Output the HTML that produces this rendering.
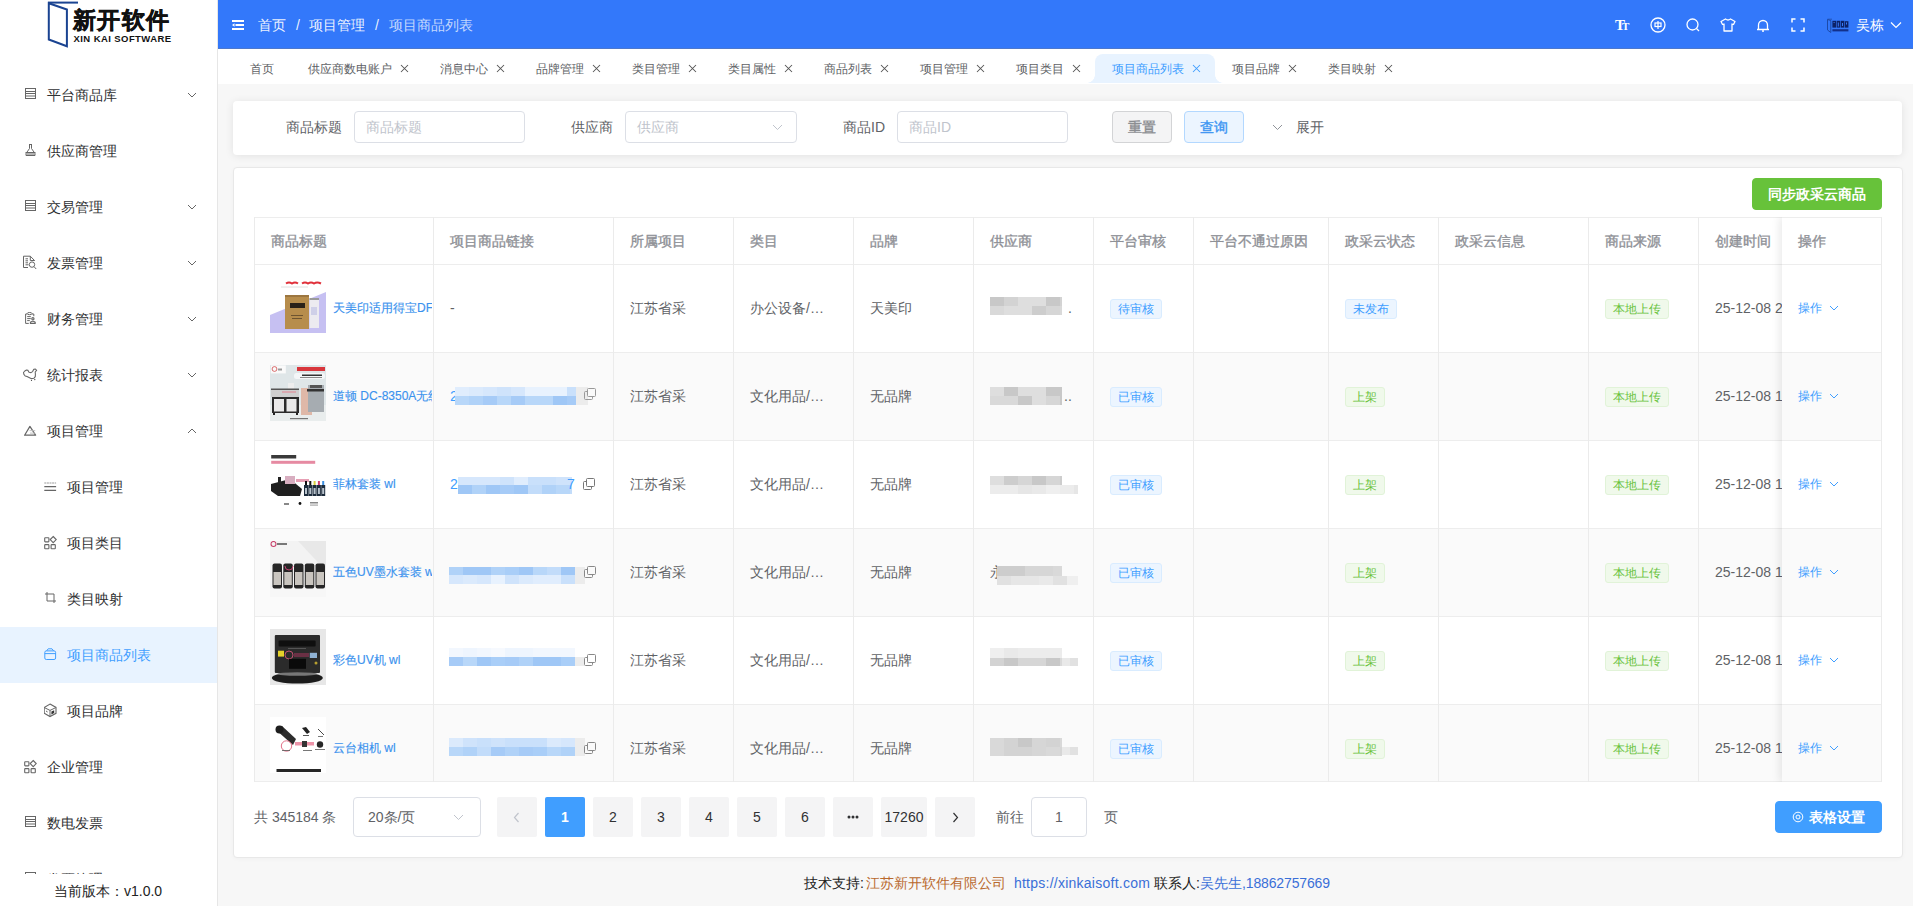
<!DOCTYPE html>
<html><head><meta charset="utf-8"><style>
*{box-sizing:border-box;margin:0;padding:0}
html,body{width:1913px;height:906px;overflow:hidden;background:#f7f7f7;font-family:"Liberation Sans",sans-serif;font-size:14px;color:#303133}
.a{position:absolute;white-space:nowrap}
#side{position:absolute;left:0;top:0;width:218px;height:906px;background:#fff;border-right:1px solid #e6e6e6;overflow:hidden}
.mt{position:absolute;font-size:14px;color:#303133;line-height:20px}
#hdr{position:absolute;left:218px;top:0;width:1695px;height:48px;background:#3378fa}
#tabs{position:absolute;left:218px;top:48px;width:1695px;height:36px;background:#fff}
.tab{position:absolute;font-size:12px;color:#606266;line-height:16px}
.card{position:absolute;background:#fff;border-radius:4px}
.lbl{position:absolute;font-size:14px;color:#606266;line-height:20px}
.inp{position:absolute;height:32px;border:1px solid #dcdfe6;border-radius:4px;background:#fff;font-size:14px;color:#c0c4cc;line-height:30px;padding-left:11px}
.btn{position:absolute;height:32px;border-radius:4px;text-align:center;line-height:30px;font-size:14px}
.vl{position:absolute;width:1px;background:#ebebeb}
.hl{position:absolute;height:1px;background:#ededed}
.th{position:absolute;font-size:14px;color:#8e9096;font-weight:normal;-webkit-text-stroke:0.35px #8e9096;line-height:20px}
.td{position:absolute;font-size:14px;color:#606266;line-height:20px}
.tag{position:absolute;height:20px;border-radius:3px;font-size:12px;line-height:18px;text-align:center;border:1px solid}
.tb{background:#ecf5ff;border-color:#d9ecff;color:#409eff}
.tg{background:#f0f9eb;border-color:#e1f3d8;color:#67c23a}
.pg{position:absolute;top:797px;height:40px;width:40px;background:#f4f4f5;border-radius:2px;text-align:center;line-height:40px;font-size:14px;color:#303133}
</style></head><body>
<div id="side">
<svg class="a" style="left:40px;top:0px" width="40" height="50" viewBox="0 0 40 50">
<path d="M8.8 3.2 V39.5 L26.9 46.3 V9.5 Z" fill="none" stroke="#1a4391" stroke-width="2" stroke-linejoin="miter"/>
<path d="M8 2.6 H38" fill="none" stroke="#1a4391" stroke-width="2"/>
</svg>
<div class="a" style="left:73px;top:7px;font-size:23px;font-weight:bold;color:#111;line-height:27px;letter-spacing:1.4px;-webkit-text-stroke:0.5px #111">新开软件</div>
<div class="a" style="left:73.5px;top:33.5px;font-size:9.5px;font-weight:bold;color:#111;line-height:10px;letter-spacing:0.42px">XIN KAI SOFTWARE</div>
<svg class="a" style="left:24px;top:87px" width="15" height="15" viewBox="0 0 15 15" fill="none" stroke="#666" stroke-width="1"><rect x="1.5" y="1.5" width="10" height="10"/><path d="M1.5 4.5h10M1.5 6.5h10M1.5 9h10"/></svg>
<div class="mt" style="left:47px;top:84.5px;color:#303133">平台商品库</div>
<svg class="a" style="left:187px;top:91.5px;stroke-width:1" width="10" height="6" viewBox="0 0 10 6" fill="none" stroke="#666" stroke-width="1"><path d="M1 1l4 4 4-4"/></svg>
<svg class="a" style="left:24px;top:143px" width="15" height="15" viewBox="0 0 15 15" fill="none" stroke="#666" stroke-width="1"><path d="M5 1.5h3M5.5 1.5v4L2 10.5v2h9v-2L7.5 5.5v-4M1.5 9.5h10M2.5 11h8"/></svg>
<div class="mt" style="left:47px;top:140.5px;color:#303133">供应商管理</div>
<svg class="a" style="left:24px;top:199px" width="15" height="15" viewBox="0 0 15 15" fill="none" stroke="#666" stroke-width="1"><rect x="1.5" y="1.5" width="10" height="10"/><path d="M1.5 4.5h10M1.5 6.5h10M1.5 9h10"/></svg>
<div class="mt" style="left:47px;top:196.5px;color:#303133">交易管理</div>
<svg class="a" style="left:187px;top:203.5px;stroke-width:1" width="10" height="6" viewBox="0 0 10 6" fill="none" stroke="#666" stroke-width="1"><path d="M1 1l4 4 4-4"/></svg>
<svg class="a" style="left:23px;top:255px" width="15" height="15" viewBox="0 0 15 15" fill="none" stroke="#666" stroke-width="1"><path d="M0.5 1.2 H7.3 L11.5 5.5 V6 M0.5 1.2 V12.5 H5 M7.3 1.2 V5.5 H11.5 M2.5 3.8 h2.5 M2.5 5.8 h2.5 M2.5 7.8 h2.5 M2.5 9.8 h3"/><circle cx="9" cy="9.6" r="2.7"/><path d="M11 11.6 L13.2 14"/></svg>
<div class="mt" style="left:47px;top:252.5px;color:#303133">发票管理</div>
<svg class="a" style="left:187px;top:259.5px;stroke-width:1" width="10" height="6" viewBox="0 0 10 6" fill="none" stroke="#666" stroke-width="1"><path d="M1 1l4 4 4-4"/></svg>
<svg class="a" style="left:24px;top:311px" width="15" height="15" viewBox="0 0 15 15" fill="none" stroke="#666" stroke-width="1"><path d="M1.6 3 V12.4 H4.8 M1.6 3 H3.2 M8 3 H9.8 V5.2 M3.2 5.6 h3.6 M3.2 7.6 h3.6 M3.2 9.6 h2.6"/><ellipse cx="5.6" cy="2.6" rx="2.4" ry="1.1"/><circle cx="8.9" cy="7.8" r="1.1" stroke-width="1.2"/><path d="M6.4 12.4 V11.2 Q8.9 9.4 11.2 11.2 V12.4 Z" stroke-width="1.1"/></svg>
<div class="mt" style="left:47px;top:308.5px;color:#303133">财务管理</div>
<svg class="a" style="left:187px;top:315.5px;stroke-width:1" width="10" height="6" viewBox="0 0 10 6" fill="none" stroke="#666" stroke-width="1"><path d="M1 1l4 4 4-4"/></svg>
<svg class="a" style="left:23px;top:367px" width="15" height="15" viewBox="0 0 15 15" fill="none" stroke="#666" stroke-width="1"><path d="M0.5 5.5 L1.8 4 L3.5 3 L5 3.4 L6 5.3 L8 5.6 L9.6 4.6 L10.8 2.2 L12.4 2 L13.6 3.4 L12.2 5 L12.4 7.2 L12.3 9.6 L11 11.2 L8 11.6 L6 10.6 L4 9.6 L2.2 9 L0.9 7.4 Z" stroke-linejoin="round" stroke-width="1.1"/><circle cx="8.5" cy="13.4" r=".6" fill="#555" stroke="none"/><circle cx="11.8" cy="12.6" r=".7" fill="#444" stroke="none"/></svg>
<div class="mt" style="left:47px;top:364.5px;color:#303133">统计报表</div>
<svg class="a" style="left:187px;top:371.5px;stroke-width:1" width="10" height="6" viewBox="0 0 10 6" fill="none" stroke="#666" stroke-width="1"><path d="M1 1l4 4 4-4"/></svg>
<svg class="a" style="left:24px;top:423px" width="15" height="15" viewBox="0 0 15 15" fill="none" stroke="#666" stroke-width="1"><path d="M5.9 3.4 L0.6 12.2 H11.6 Z" stroke-width="1.2" stroke-linejoin="round"/><path d="M5.6 7.6 H11.2 M6 10.1 H11" stroke="#bbb" stroke-width=".9"/></svg>
<div class="mt" style="left:47px;top:420.5px;color:#303133">项目管理</div>
<svg class="a" style="left:187px;top:427.5px;stroke-width:1" width="10" height="6" viewBox="0 0 10 6" fill="none" stroke="#666" stroke-width="1"><path d="M1 5l4-4 4 4"/></svg>
<svg class="a" style="left:44px;top:479px" width="15" height="15" viewBox="0 0 15 15" fill="none" stroke="#666" stroke-width="1"><path d="M0.3 4h11.8" stroke="#999" stroke-dasharray="2 .6"/><path d="M0.3 7.6h11.8M0.3 11.4h11.8" stroke-width="1.1"/></svg>
<div class="mt" style="left:67px;top:476.5px;color:#303133">项目管理</div>
<svg class="a" style="left:44px;top:535px" width="15" height="15" viewBox="0 0 15 15" fill="none" stroke="#666" stroke-width="1"><rect x="0.7" y="2.7" width="4.2" height="4.2" rx=".6" stroke-width="1.1"/><rect x="0.7" y="9.6" width="4.2" height="4.2" rx=".6" stroke-width="1.1"/><rect x="7.1" y="9.6" width="4.2" height="4.2" rx=".6" stroke-width="1.1"/><path d="M9.2 1.5 L12.2 4.6 L9.2 7.6 L6.2 4.6 Z" stroke-width="1.1"/></svg>
<div class="mt" style="left:67px;top:532.5px;color:#303133">项目类目</div>
<svg class="a" style="left:44px;top:591px" width="15" height="15" viewBox="0 0 15 15" fill="none" stroke="#666" stroke-width="1"><path d="M3 1v9h9M1 3h9v9"/></svg>
<div class="mt" style="left:67px;top:588.5px;color:#303133">类目映射</div>
<div class="a" style="left:0;top:627px;width:217px;height:56px;background:#e8f3ff"></div>
<svg class="a" style="left:44px;top:647px" width="15" height="15" viewBox="0 0 15 15" fill="none" stroke="#409eff" stroke-width="1"><rect x="0.8" y="3.9" width="10.8" height="8.6" rx="1.5"/><path d="M2.6 3.9 L4.2 1.8 H8 L9.6 3.9 M0.8 6.6h10.8"/></svg>
<div class="mt" style="left:67px;top:644.5px;color:#409eff">项目商品列表</div>
<svg class="a" style="left:44px;top:703px" width="15" height="15" viewBox="0 0 15 15" fill="none" stroke="#666" stroke-width="1"><path d="M6 1.1 L12 4.4 V10.3 L6 13.5 L0.2 10.3 V4.4 Z" stroke-width="1.1"/><path d="M0.4 4.6 L6 7.4 L11.8 4.6 M6 7.4 V13.4 M2 8 L3.6 9"/><path d="M7.4 8.6 L10.2 7.3 V10 L7.4 11.4 Z" fill="#333" stroke="none"/></svg>
<div class="mt" style="left:67px;top:700.5px;color:#303133">项目品牌</div>
<svg class="a" style="left:24px;top:759px" width="15" height="15" viewBox="0 0 15 15" fill="none" stroke="#666" stroke-width="1"><rect x="0.7" y="2.7" width="4.2" height="4.2" rx=".6" stroke-width="1.1"/><rect x="0.7" y="9.6" width="4.2" height="4.2" rx=".6" stroke-width="1.1"/><rect x="7.1" y="9.6" width="4.2" height="4.2" rx=".6" stroke-width="1.1"/><path d="M9.2 1.5 L12.2 4.6 L9.2 7.6 L6.2 4.6 Z" stroke-width="1.1"/></svg>
<div class="mt" style="left:47px;top:756.5px;color:#303133">企业管理</div>
<svg class="a" style="left:24px;top:815px" width="15" height="15" viewBox="0 0 15 15" fill="none" stroke="#666" stroke-width="1"><rect x="1.5" y="1.5" width="10" height="10"/><path d="M1.5 4.5h10M1.5 6.5h10M1.5 9h10"/></svg>
<div class="mt" style="left:47px;top:812.5px;color:#303133">数电发票</div>
<svg class="a" style="left:24px;top:871px" width="15" height="15" viewBox="0 0 15 15" fill="none" stroke="#666" stroke-width="1"><rect x="1.5" y="1.5" width="10" height="10"/><path d="M1.5 4.5h10M1.5 6.5h10M1.5 9h10"/></svg>
<div class="mt" style="left:47px;top:868.5px;color:#303133">发票管理</div>
<div class="a" style="left:0;top:874px;width:217px;height:32px;background:#fff"></div>
<div class="a" style="left:54px;top:881px;line-height:20px;font-size:14px;color:#222">当前版本：v1.0.0</div>
</div>
<div id="hdr"></div>
<svg class="a" style="left:231px;top:19px" width="14" height="12" viewBox="0 0 14 12">
<rect x="1" y="1" width="12" height="2" fill="#ffffff"/><rect x="4.5" y="5" width="8.5" height="2" fill="#ffffff"/>
<path d="M1 6 L3.5 4.2 L3.5 7.8 Z" fill="#ffffff"/><rect x="1" y="9" width="12" height="2" fill="#ffffff"/></svg>
<div class="a" style="left:258px;top:15px;line-height:20px;font-size:14px;color:rgba(255,255,255,0.92)">首页</div>
<div class="a" style="left:296px;top:15px;line-height:20px;font-size:14px;color:rgba(255,255,255,0.92)">/</div>
<div class="a" style="left:309px;top:15px;line-height:20px;font-size:14px;color:rgba(255,255,255,0.92)">项目管理</div>
<div class="a" style="left:375px;top:15px;line-height:20px;font-size:14px;color:rgba(255,255,255,0.92)">/</div>
<div class="a" style="left:389px;top:15px;line-height:20px;font-size:14px;color:rgba(255,255,255,0.72)">项目商品列表</div>
<div class="a" style="left:1615px;top:15px;font-family:'Liberation Serif',serif;font-weight:bold;color:#fff;line-height:20px"><span style="font-size:15px">T</span><span style="font-size:11px;margin-left:-3px">T</span></div>
<svg class="a" style="left:1650px;top:17px" width="16" height="16" viewBox="0 0 16 16" fill="none" stroke="#fff" stroke-width="1.3">
<circle cx="8" cy="8" r="7"/><rect x="5" y="6" width="6" height="3.5" stroke-width="1.2"/><path d="M8 4v8" stroke-width="1.2"/></svg>
<svg class="a" style="left:1686px;top:18px" width="14" height="14" viewBox="0 0 14 14" fill="none" stroke="#fff" stroke-width="1.3">
<circle cx="6.5" cy="6.5" r="5.5"/><path d="M10.5 10.5l2.5 2.5"/></svg>
<svg class="a" style="left:1720px;top:18px" width="16" height="14" viewBox="0 0 16 14" fill="none" stroke="#fff" stroke-width="1.3" stroke-linejoin="round">
<path d="M5.5 1 L1 3.5 L2.5 6.5 L4 6 V13 H12 V6 L13.5 6.5 L15 3.5 L10.5 1 Q8 3 5.5 1 Z"/></svg>
<svg class="a" style="left:1756px;top:18px" width="14" height="14" viewBox="0 0 14 14" fill="none" stroke="#fff" stroke-width="1.3">
<path d="M2.5 11 V7 A4.5 4.5 0 0 1 11.5 7 V11 M1 11.5h12"/><path d="M6 13h2"/></svg>
<svg class="a" style="left:1791px;top:18px" width="14" height="14" viewBox="0 0 14 14" fill="none" stroke="#fff" stroke-width="1.5">
<path d="M1 4.5V1h3.5M9.5 1H13v3.5M13 9.5V13H9.5M4.5 13H1V9.5"/></svg>
<svg class="a" style="left:1826px;top:18px" width="24" height="16" viewBox="0 0 24 16">
<path d="M1.5 1.5 V12 L4.8 14.5 V2.5 Z" fill="none" stroke="#1d4aa8" stroke-width="1"/><path d="M1.5 1.2 H6" stroke="#1d4aa8" stroke-width="0.8"/>
<g fill="#0d2266"><rect x="6.4" y="2.8" width="3.6" height="6.8"/><rect x="10.6" y="2.8" width="3.6" height="6.8"/><rect x="14.8" y="2.8" width="3.6" height="6.8"/><rect x="19" y="3.2" width="3.4" height="6.4"/></g>
<g fill="#12308a"><rect x="6.4" y="11.2" width="16" height="2.2"/></g>
<g fill="#3a7bf7"><rect x="7.6" y="4" width="1" height="1"/><rect x="11.8" y="4.5" width="1" height="4"/><rect x="16" y="5" width="1" height="3"/><rect x="20" y="4.5" width="1" height="2"/></g></svg>
<div class="a" style="left:1856px;top:15px;line-height:20px;font-size:14px;color:#fff">吴栋</div>
<svg class="a" style="left:1890px;top:21px" width="12" height="8" viewBox="0 0 12 8" fill="none" stroke="#fff" stroke-width="1.2"><path d="M1 1.5l5 5 5-5"/></svg>
<div id="tabs"></div>
<div class="a" style="left:218px;top:48px;width:1695px;height:1px;background:#4d78cc"></div>
<div class="a" style="left:1095px;top:54px;width:120px;height:29px;background:#e8f3ff;border-radius:8px 8px 0 0"></div>
<div class="a" style="left:1087px;top:75px;width:8px;height:8px;background:radial-gradient(circle at 0 0, #fff 7.5px, #e8f3ff 8px)"></div>
<div class="a" style="left:1215px;top:75px;width:8px;height:8px;background:radial-gradient(circle at 100% 0, #fff 7.5px, #e8f3ff 8px)"></div>
<div class="tab" style="left:250.3px;top:60.5px;color:#606266">首页</div>
<div class="tab" style="left:308.3px;top:60.5px;color:#606266">供应商数电账户</div>
<svg class="a" style="left:400px;top:64px" width="9" height="9" viewBox="0 0 9 9" fill="none" stroke="#555" stroke-width="1.05"><path d="M1 1l7 7M8 1l-7 7"/></svg>
<div class="tab" style="left:440.3px;top:60.5px;color:#606266">消息中心</div>
<svg class="a" style="left:496px;top:64px" width="9" height="9" viewBox="0 0 9 9" fill="none" stroke="#555" stroke-width="1.05"><path d="M1 1l7 7M8 1l-7 7"/></svg>
<div class="tab" style="left:536.3px;top:60.5px;color:#606266">品牌管理</div>
<svg class="a" style="left:592px;top:64px" width="9" height="9" viewBox="0 0 9 9" fill="none" stroke="#555" stroke-width="1.05"><path d="M1 1l7 7M8 1l-7 7"/></svg>
<div class="tab" style="left:632.3px;top:60.5px;color:#606266">类目管理</div>
<svg class="a" style="left:688px;top:64px" width="9" height="9" viewBox="0 0 9 9" fill="none" stroke="#555" stroke-width="1.05"><path d="M1 1l7 7M8 1l-7 7"/></svg>
<div class="tab" style="left:728.3px;top:60.5px;color:#606266">类目属性</div>
<svg class="a" style="left:784px;top:64px" width="9" height="9" viewBox="0 0 9 9" fill="none" stroke="#555" stroke-width="1.05"><path d="M1 1l7 7M8 1l-7 7"/></svg>
<div class="tab" style="left:824.3px;top:60.5px;color:#606266">商品列表</div>
<svg class="a" style="left:880px;top:64px" width="9" height="9" viewBox="0 0 9 9" fill="none" stroke="#555" stroke-width="1.05"><path d="M1 1l7 7M8 1l-7 7"/></svg>
<div class="tab" style="left:920.3px;top:60.5px;color:#606266">项目管理</div>
<svg class="a" style="left:976px;top:64px" width="9" height="9" viewBox="0 0 9 9" fill="none" stroke="#555" stroke-width="1.05"><path d="M1 1l7 7M8 1l-7 7"/></svg>
<div class="tab" style="left:1016.3px;top:60.5px;color:#606266">项目类目</div>
<svg class="a" style="left:1072px;top:64px" width="9" height="9" viewBox="0 0 9 9" fill="none" stroke="#555" stroke-width="1.05"><path d="M1 1l7 7M8 1l-7 7"/></svg>
<div class="tab" style="left:1112.3px;top:60.5px;color:#409eff">项目商品列表</div>
<svg class="a" style="left:1192px;top:64px" width="9" height="9" viewBox="0 0 9 9" fill="none" stroke="#409eff" stroke-width="1.05"><path d="M1 1l7 7M8 1l-7 7"/></svg>
<div class="tab" style="left:1232.3px;top:60.5px;color:#606266">项目品牌</div>
<svg class="a" style="left:1288px;top:64px" width="9" height="9" viewBox="0 0 9 9" fill="none" stroke="#555" stroke-width="1.05"><path d="M1 1l7 7M8 1l-7 7"/></svg>
<div class="tab" style="left:1328.3px;top:60.5px;color:#606266">类目映射</div>
<svg class="a" style="left:1384px;top:64px" width="9" height="9" viewBox="0 0 9 9" fill="none" stroke="#555" stroke-width="1.05"><path d="M1 1l7 7M8 1l-7 7"/></svg>
<div class="card" style="left:233px;top:101px;width:1669px;height:54px;box-shadow:0 1px 8px rgba(0,0,0,.09)"></div>
<div class="lbl" style="left:286px;top:117px">商品标题</div>
<div class="inp" style="left:354px;top:111px;width:171px">商品标题</div>
<div class="lbl" style="left:571px;top:117px">供应商</div>
<div class="inp" style="left:625px;top:111px;width:172px">供应商</div>
<svg class="a" style="left:772px;top:124px" width="11" height="7" viewBox="0 0 11 7" fill="none" stroke="#c0c4cc" stroke-width="1"><path d="M1 1l4.5 4.5L10 1"/></svg>
<div class="lbl" style="left:843px;top:117px">商品ID</div>
<div class="inp" style="left:897px;top:111px;width:171px">商品ID</div>
<div class="btn" style="left:1112px;top:111px;width:60px;background:#f4f4f5;border:1px solid #d3d4d6;color:#8a8c90;-webkit-text-stroke:0.4px #8a8c90">重置</div>
<div class="btn" style="left:1184px;top:111px;width:60px;background:#ecf5ff;border:1px solid #b3d8ff;color:#3d95f2;-webkit-text-stroke:0.4px #3d95f2">查询</div>
<svg class="a" style="left:1272px;top:124px" width="11" height="7" viewBox="0 0 11 7" fill="none" stroke="#909399" stroke-width="1"><path d="M1 1l4.5 4.5L10 1"/></svg>
<div class="lbl" style="left:1296px;top:117px">展开</div>
<div class="card" style="left:233px;top:167px;width:1670px;height:691px;border:1px solid #e8e8e8;box-shadow:0 1px 4px rgba(0,0,0,.03)"></div>
<div class="btn" style="left:1752px;top:178px;width:130px;background:#67c23a;border:1px solid #67c23a;color:#fff;font-weight:bold">同步政采云商品</div>
<div class="a" style="left:254px;top:217px;width:1628px;height:565px;overflow:hidden;background:#fff">
<div class="a" style="left:0;top:136px;width:1628px;height:87px;background:#fafafa"></div>
<div class="a" style="left:0;top:312px;width:1628px;height:87px;background:#fafafa"></div>
<div class="a" style="left:0;top:488px;width:1628px;height:87px;background:#fafafa"></div>
<div class="hl" style="left:0;top:0;width:1628px"></div>
<div class="hl" style="left:0;top:47px;width:1628px"></div>
<div class="hl" style="left:0;top:135px;width:1628px"></div>
<div class="hl" style="left:0;top:223px;width:1628px"></div>
<div class="hl" style="left:0;top:311px;width:1628px"></div>
<div class="hl" style="left:0;top:399px;width:1628px"></div>
<div class="hl" style="left:0;top:487px;width:1628px"></div>
<div class="hl" style="left:0;top:575px;width:1628px"></div>
<div class="hl" style="left:0;top:564px;width:1628px"></div>
<div class="vl" style="left:0px;top:0;height:565px"></div>
<div class="vl" style="left:179px;top:0;height:565px"></div>
<div class="vl" style="left:359px;top:0;height:565px"></div>
<div class="vl" style="left:479px;top:0;height:565px"></div>
<div class="vl" style="left:599px;top:0;height:565px"></div>
<div class="vl" style="left:719px;top:0;height:565px"></div>
<div class="vl" style="left:839px;top:0;height:565px"></div>
<div class="vl" style="left:939px;top:0;height:565px"></div>
<div class="vl" style="left:1074px;top:0;height:565px"></div>
<div class="vl" style="left:1184px;top:0;height:565px"></div>
<div class="vl" style="left:1334px;top:0;height:565px"></div>
<div class="vl" style="left:1444px;top:0;height:565px"></div>
<div class="th" style="left:17px;top:14px">商品标题</div>
<div class="th" style="left:196px;top:14px">项目商品链接</div>
<div class="th" style="left:376px;top:14px">所属项目</div>
<div class="th" style="left:496px;top:14px">类目</div>
<div class="th" style="left:616px;top:14px">品牌</div>
<div class="th" style="left:736px;top:14px">供应商</div>
<div class="th" style="left:856px;top:14px">平台审核</div>
<div class="th" style="left:956px;top:14px">平台不通过原因</div>
<div class="th" style="left:1091px;top:14px">政采云状态</div>
<div class="th" style="left:1201px;top:14px">政采云信息</div>
<div class="th" style="left:1351px;top:14px">商品来源</div>
<div class="th" style="left:1461px;top:14px">创建时间</div>
<svg class="a" style="left:16px;top:60px" width="56" height="56" viewBox="0 0 56 56"><rect width="56" height="56" fill="#fff"/>
<path d="M0 38 L56 15 V56 H0 Z" fill="#c6c0f2"/>
<path d="M16 6.5 q3 -2 6 0 q3 -2 6 0 M32 6.5 q3 -2 6 0 q3 -2 6 0 q3 -2 7 0" stroke="#e0303a" stroke-width="2" fill="none"/>
<path d="M11 10h27" stroke="#d8d8d8" stroke-width="0.8"/>
<rect x="15" y="18" width="24" height="34" fill="#b78d4c"/>
<rect x="15" y="18" width="24" height="2" fill="#9c7640"/>
<rect x="20" y="26" width="15" height="5" fill="#2a2118"/>
<rect x="21" y="38" width="12" height="1" fill="#6e5430"/><rect x="22" y="41" width="10" height="1" fill="#6e5430"/>
<rect x="39.5" y="21" width="9.5" height="30" fill="#ecebf0"/>
<rect x="39.5" y="21" width="9.5" height="2" fill="#9a9a9a"/><rect x="41" y="30" width="6" height="8" fill="#cfd0e8"/></svg>
<div class="a" style="left:79px;top:82px;width:99px;overflow:hidden;font-size:12px;line-height:18px;color:#3a92ee;-webkit-text-stroke:0.15px #3a92ee">天美印适用得宝DF</div>
<div class="td" style="left:196px;top:81px">-</div>
<div class="td" style="left:376px;top:81px">江苏省采</div>
<div class="td" style="left:496px;top:81px">办公设备/…</div>
<div class="td" style="left:616px;top:81px">天美印</div>
<div class="a" style="left:736px;top:80px;width:72px;height:18px;filter:blur(0.7px)"><div class="a" style="left:0px;top:0px;width:14px;height:9px;background:#c8c8c8"></div><div class="a" style="left:14px;top:0px;width:14px;height:9px;background:#d3d3d3"></div><div class="a" style="left:28px;top:0px;width:14px;height:9px;background:#dedede"></div><div class="a" style="left:42px;top:0px;width:14px;height:9px;background:#dedede"></div><div class="a" style="left:56px;top:0px;width:14px;height:9px;background:#c8c8c8"></div><div class="a" style="left:70px;top:0px;width:2px;height:9px;background:#d3d3d3"></div><div class="a" style="left:0px;top:9px;width:14px;height:9px;background:#d9d9d9"></div><div class="a" style="left:14px;top:9px;width:14px;height:9px;background:#dedede"></div><div class="a" style="left:28px;top:9px;width:14px;height:9px;background:#dedede"></div><div class="a" style="left:42px;top:9px;width:14px;height:9px;background:#cdcdcd"></div><div class="a" style="left:56px;top:9px;width:14px;height:9px;background:#d6d6d6"></div><div class="a" style="left:70px;top:9px;width:2px;height:9px;background:#d9d9d9"></div></div><div class="td" style="left:814px;top:81px">.</div>
<div class="tag tb" style="left:856px;top:82px;width:52px">待审核</div>
<div class="tag tb" style="left:1091px;top:82px;width:52px">未发布</div>
<div class="tag tg" style="left:1351px;top:82px;width:64px">本地上传</div>
<div class="td" style="left:1461px;top:81px">25-12-08 23:11:20</div>
<svg class="a" style="left:16px;top:148px" width="56" height="56" viewBox="0 0 56 56"><rect width="56" height="56" fill="#dfe6e8"/>
<rect x="0" y="40" width="56" height="16" fill="#e9eded"/>
<rect x="0.8" y="0.4" width="15" height="8" fill="#fafafa"/><circle cx="4.5" cy="4" r="2.4" fill="none" stroke="#c33" stroke-width=".7"/><rect x="8" y="3.5" width="4" height="2" fill="#999"/>
<rect x="27" y="2" width="28" height="4" fill="#d8363c"/>
<rect x="24" y="8" width="31" height="6" rx="2.5" fill="#f4f6f8"/><rect x="32" y="9.5" width="20" height="1.5" fill="#333"/><rect x="30" y="12" width="22" height="1" fill="#888"/>
<rect x="18" y="18" width="6" height="6" fill="#eee"/>
<rect x="1" y="24" width="28" height="8" fill="#cfcfcf"/><rect x="1" y="23.5" width="28" height="1.5" fill="#555"/><rect x="12" y="26" width="14" height="2" fill="#d9a9b0"/>
<rect x="2" y="32" width="27" height="16" fill="#2b2b2b"/><rect x="4" y="34" width="10" height="12.5" fill="#e9e9e9"/><rect x="16.5" y="34" width="10" height="12.5" fill="#e9e9e9"/>
<rect x="3" y="48" width="2" height="2" fill="#222"/><rect x="26" y="48" width="2" height="2" fill="#222"/>
<rect x="31" y="23" width="11" height="27" fill="#dfb8a8"/>
<rect x="38" y="20" width="16" height="27" fill="#a6acb1"/><rect x="37" y="24" width="17" height="2.5" fill="#333"/><rect x="40" y="20" width="12" height="3" fill="#555"/>
<rect x="20" y="53" width="18" height="1.2" fill="#777"/></svg>
<div class="a" style="left:79px;top:170px;width:99px;overflow:hidden;font-size:12px;line-height:18px;color:#3a92ee;-webkit-text-stroke:0.15px #3a92ee">道顿 DC-8350A无线胶装</div>
<div class="a" style="left:196px;top:169px;font-size:14px;line-height:20px;color:#409eff">2</div><div class="a" style="left:201px;top:170px;width:121px;height:18px;filter:blur(0.7px)"><div class="a" style="left:0px;top:0px;width:14px;height:9px;background:#e0edfd"></div><div class="a" style="left:14px;top:0px;width:14px;height:9px;background:#dbeafc"></div><div class="a" style="left:28px;top:0px;width:14px;height:9px;background:#d6e7fc"></div><div class="a" style="left:42px;top:0px;width:14px;height:9px;background:#cfe3fb"></div><div class="a" style="left:56px;top:0px;width:14px;height:9px;background:#d6e7fc"></div><div class="a" style="left:70px;top:0px;width:14px;height:9px;background:#e8f2fe"></div><div class="a" style="left:84px;top:0px;width:14px;height:9px;background:#e8f2fe"></div><div class="a" style="left:98px;top:0px;width:14px;height:9px;background:#e8f2fe"></div><div class="a" style="left:112px;top:0px;width:9px;height:9px;background:#c9e0fb"></div><div class="a" style="left:0px;top:9px;width:14px;height:9px;background:#b8d7f9"></div><div class="a" style="left:14px;top:9px;width:14px;height:9px;background:#b0d2f8"></div><div class="a" style="left:28px;top:9px;width:14px;height:9px;background:#a6cbf7"></div><div class="a" style="left:42px;top:9px;width:14px;height:9px;background:#b8d7f9"></div><div class="a" style="left:56px;top:9px;width:14px;height:9px;background:#a6cbf7"></div><div class="a" style="left:70px;top:9px;width:14px;height:9px;background:#b8d7f9"></div><div class="a" style="left:84px;top:9px;width:14px;height:9px;background:#b8d7f9"></div><div class="a" style="left:98px;top:9px;width:14px;height:9px;background:#9fc7f6"></div><div class="a" style="left:112px;top:9px;width:9px;height:9px;background:#a6cbf7"></div></div><div class="a" style="left:322px;top:170px;width:12px;height:18px;background:#ececec;filter:blur(.6px)"></div><svg class="a" style="left:330px;top:171px" width="12" height="12" viewBox="0 0 12 12" fill="none" stroke="#999" stroke-width="1"><rect x="3.5" y="0.5" width="8" height="8" rx="1"/><path d="M3.5 3.5h-2a1 1 0 0 0-1 1v6a1 1 0 0 0 1 1h6a1 1 0 0 0 1-1v-2"/></svg>
<div class="td" style="left:376px;top:169px">江苏省采</div>
<div class="td" style="left:496px;top:169px">文化用品/…</div>
<div class="td" style="left:616px;top:169px">无品牌</div>
<div class="a" style="left:736px;top:170px;width:72px;height:18px;filter:blur(0.7px)"><div class="a" style="left:0px;top:0px;width:14px;height:9px;background:#dedede"></div><div class="a" style="left:14px;top:0px;width:14px;height:9px;background:#c8c8c8"></div><div class="a" style="left:28px;top:0px;width:14px;height:9px;background:#dedede"></div><div class="a" style="left:42px;top:0px;width:14px;height:9px;background:#dedede"></div><div class="a" style="left:56px;top:0px;width:14px;height:9px;background:#c8c8c8"></div><div class="a" style="left:70px;top:0px;width:2px;height:9px;background:#c8c8c8"></div><div class="a" style="left:0px;top:9px;width:14px;height:9px;background:#d9d9d9"></div><div class="a" style="left:14px;top:9px;width:14px;height:9px;background:#d9d9d9"></div><div class="a" style="left:28px;top:9px;width:14px;height:9px;background:#c8c8c8"></div><div class="a" style="left:42px;top:9px;width:14px;height:9px;background:#dedede"></div><div class="a" style="left:56px;top:9px;width:14px;height:9px;background:#d6d6d6"></div><div class="a" style="left:70px;top:9px;width:2px;height:9px;background:#c8c8c8"></div></div><div class="td" style="left:810px;top:169px">..</div>
<div class="tag tb" style="left:856px;top:170px;width:52px">已审核</div>
<div class="tag tg" style="left:1091px;top:170px;width:40px">上架</div>
<div class="tag tg" style="left:1351px;top:170px;width:64px">本地上传</div>
<div class="td" style="left:1461px;top:169px">25-12-08 13:11:20</div>
<svg class="a" style="left:16px;top:236px" width="56" height="56" viewBox="0 0 56 56"><rect width="56" height="56" fill="#fff"/>
<rect x="1.2" y="2" width="25" height="3.5" fill="#3a3a3a"/><rect x="1.2" y="7.8" width="44" height="3" fill="#e68aa2"/>
<path d="M1 31 L20 26 L32 36 L30 43 L8 43 L1 38 Z" fill="#1f1f1f"/>
<rect x="8" y="24" width="3" height="7" fill="#222"/>
<rect x="15" y="23" width="10" height="8" fill="#d8aec0"/><rect x="26" y="26" width="13" height="3" fill="#e79fb4"/>
<g fill="#1d2c3c"><rect x="34" y="32" width="4" height="11"/><rect x="38.3" y="32" width="4" height="11"/><rect x="42.6" y="32" width="4" height="11"/><rect x="46.9" y="32" width="4" height="11"/><rect x="51.2" y="32" width="4" height="11"/></g>
<g fill="#b9c3cc"><rect x="35" y="35" width="2" height="6"/><rect x="39.3" y="35" width="2" height="6"/><rect x="43.6" y="35" width="2" height="6"/><rect x="47.9" y="35" width="2" height="6"/><rect x="52.2" y="35" width="2" height="6"/></g>
<rect x="35" y="28" width="2" height="4" fill="#111"/><rect x="39.3" y="28" width="2" height="4" fill="#111"/><rect x="43.6" y="28" width="2" height="4" fill="#d8d040"/><rect x="47.9" y="28" width="2" height="4" fill="#d04070"/><rect x="52.2" y="28" width="2" height="4" fill="#3d8fe0"/>
<rect x="14" y="50" width="5" height="2" fill="#888"/><circle cx="30" cy="50.5" r="1.4" fill="#111"/><rect x="40" y="49" width="8" height="1.5" fill="#888"/><rect x="40" y="51.5" width="8" height="1.2" fill="#aaa"/></svg>
<div class="a" style="left:79px;top:258px;width:99px;overflow:hidden;font-size:12px;line-height:18px;color:#3a92ee;-webkit-text-stroke:0.15px #3a92ee">菲林套装 wl</div>
<div class="a" style="left:196px;top:257px;font-size:14px;line-height:20px;color:#409eff">2</div><div class="a" style="left:204px;top:260px;width:114px;height:17px;filter:blur(0.7px)"><div class="a" style="left:0px;top:0px;width:14px;height:8px;background:#d6e7fc"></div><div class="a" style="left:14px;top:0px;width:14px;height:8px;background:#d6e7fc"></div><div class="a" style="left:28px;top:0px;width:14px;height:8px;background:#d6e7fc"></div><div class="a" style="left:42px;top:0px;width:14px;height:8px;background:#cfe3fb"></div><div class="a" style="left:56px;top:0px;width:14px;height:8px;background:#e0edfd"></div><div class="a" style="left:70px;top:0px;width:14px;height:8px;background:#c9e0fb"></div><div class="a" style="left:84px;top:0px;width:14px;height:8px;background:#c9e0fb"></div><div class="a" style="left:98px;top:0px;width:14px;height:8px;background:#cfe3fb"></div><div class="a" style="left:112px;top:0px;width:2px;height:8px;background:#cfe3fb"></div><div class="a" style="left:0px;top:8px;width:14px;height:9px;background:#9fc7f6"></div><div class="a" style="left:14px;top:8px;width:14px;height:9px;background:#b0d2f8"></div><div class="a" style="left:28px;top:8px;width:14px;height:9px;background:#9fc7f6"></div><div class="a" style="left:42px;top:8px;width:14px;height:9px;background:#a6cbf7"></div><div class="a" style="left:56px;top:8px;width:14px;height:9px;background:#9fc7f6"></div><div class="a" style="left:70px;top:8px;width:14px;height:9px;background:#c2dcfa"></div><div class="a" style="left:84px;top:8px;width:14px;height:9px;background:#b0d2f8"></div><div class="a" style="left:98px;top:8px;width:14px;height:9px;background:#b8d7f9"></div><div class="a" style="left:112px;top:8px;width:2px;height:9px;background:#c2dcfa"></div></div><div class="a" style="left:313px;top:257px;font-size:14px;line-height:20px;color:#409eff">7</div><svg class="a" style="left:329px;top:261px" width="12" height="12" viewBox="0 0 12 12" fill="none" stroke="#777" stroke-width="1"><rect x="3.5" y="0.5" width="8" height="8" rx="1"/><path d="M3.5 3.5h-2a1 1 0 0 0-1 1v6a1 1 0 0 0 1 1h6a1 1 0 0 0 1-1v-2"/></svg>
<div class="td" style="left:376px;top:257px">江苏省采</div>
<div class="td" style="left:496px;top:257px">文化用品/…</div>
<div class="td" style="left:616px;top:257px">无品牌</div>
<div class="a" style="left:736px;top:259px;width:72px;height:9px;filter:blur(0.7px)"><div class="a" style="left:0px;top:0px;width:14px;height:9px;background:#dedede"></div><div class="a" style="left:14px;top:0px;width:14px;height:9px;background:#cdcdcd"></div><div class="a" style="left:28px;top:0px;width:14px;height:9px;background:#d6d6d6"></div><div class="a" style="left:42px;top:0px;width:14px;height:9px;background:#c8c8c8"></div><div class="a" style="left:56px;top:0px;width:14px;height:9px;background:#d6d6d6"></div><div class="a" style="left:70px;top:0px;width:2px;height:9px;background:#cdcdcd"></div></div><div class="a" style="left:736px;top:268px;width:88px;height:9px;filter:blur(0.7px)"><div class="a" style="left:0px;top:0px;width:14px;height:9px;background:#ececec"></div><div class="a" style="left:14px;top:0px;width:14px;height:9px;background:#ececec"></div><div class="a" style="left:28px;top:0px;width:14px;height:9px;background:#e6e6e6"></div><div class="a" style="left:42px;top:0px;width:14px;height:9px;background:#e9e9e9"></div><div class="a" style="left:56px;top:0px;width:14px;height:9px;background:#efefef"></div><div class="a" style="left:70px;top:0px;width:14px;height:9px;background:#ececec"></div><div class="a" style="left:84px;top:0px;width:4px;height:9px;background:#e6e6e6"></div></div>
<div class="tag tb" style="left:856px;top:258px;width:52px">已审核</div>
<div class="tag tg" style="left:1091px;top:258px;width:40px">上架</div>
<div class="tag tg" style="left:1351px;top:258px;width:64px">本地上传</div>
<div class="td" style="left:1461px;top:257px">25-12-08 13:11:20</div>
<svg class="a" style="left:16px;top:324px" width="56" height="56" viewBox="0 0 56 56"><rect width="56" height="56" fill="#f3f3f3"/>
<path d="M28 0 L56 0 V30 Z" fill="#e8e8e8"/><path d="M0 48 H56 V56 H0 Z" fill="#f7f7f7"/>
<circle cx="3.5" cy="3" r="2.5" fill="none" stroke="#c8406a" stroke-width="1.1"/><rect x="7" y="2" width="10" height="2" fill="#777"/>
<g fill="#262626"><rect x="2.5" y="22.5" width="9.5" height="25" rx="2"/><rect x="13.3" y="22.5" width="9.5" height="25" rx="2"/><rect x="24" y="22.5" width="9.5" height="25" rx="2"/><rect x="34.8" y="22.5" width="9.5" height="25" rx="2"/><rect x="45.5" y="22.5" width="9.5" height="25" rx="2"/></g>
<g fill="#c9c5bf"><rect x="3.5" y="31" width="7.5" height="13"/><rect x="14.3" y="31" width="7.5" height="13"/><rect x="25" y="31" width="7.5" height="13"/><rect x="35.8" y="31" width="7.5" height="13"/><rect x="46.5" y="31" width="7.5" height="13"/></g>
<path d="M15 25 a4 4 0 1 0 8 0" stroke="#c04070" stroke-width="1" fill="none"/></svg>
<div class="a" style="left:79px;top:346px;width:99px;overflow:hidden;font-size:12px;line-height:18px;color:#3a92ee;-webkit-text-stroke:0.15px #3a92ee">五色UV墨水套装 wl</div>
<div class="a" style="left:195px;top:350px;width:126px;height:17px;filter:blur(0.7px)"><div class="a" style="left:0px;top:0px;width:14px;height:8px;background:#b0d2f8"></div><div class="a" style="left:14px;top:0px;width:14px;height:8px;background:#9fc7f6"></div><div class="a" style="left:28px;top:0px;width:14px;height:8px;background:#9fc7f6"></div><div class="a" style="left:42px;top:0px;width:14px;height:8px;background:#b0d2f8"></div><div class="a" style="left:56px;top:0px;width:14px;height:8px;background:#a9cef8"></div><div class="a" style="left:70px;top:0px;width:14px;height:8px;background:#9fc7f6"></div><div class="a" style="left:84px;top:0px;width:14px;height:8px;background:#b8d7f9"></div><div class="a" style="left:98px;top:0px;width:14px;height:8px;background:#c2dcfa"></div><div class="a" style="left:112px;top:0px;width:14px;height:8px;background:#9fc7f6"></div><div class="a" style="left:0px;top:8px;width:14px;height:9px;background:#d6e7fc"></div><div class="a" style="left:14px;top:8px;width:14px;height:9px;background:#dbeafc"></div><div class="a" style="left:28px;top:8px;width:14px;height:9px;background:#d6e7fc"></div><div class="a" style="left:42px;top:8px;width:14px;height:9px;background:#e8f2fe"></div><div class="a" style="left:56px;top:8px;width:14px;height:9px;background:#cfe3fb"></div><div class="a" style="left:70px;top:8px;width:14px;height:9px;background:#dbeafc"></div><div class="a" style="left:84px;top:8px;width:14px;height:9px;background:#e0edfd"></div><div class="a" style="left:98px;top:8px;width:14px;height:9px;background:#e0edfd"></div><div class="a" style="left:112px;top:8px;width:14px;height:9px;background:#c9e0fb"></div></div><div class="a" style="left:321px;top:350px;width:10px;height:17px;background:#ececec;filter:blur(.6px)"></div><svg class="a" style="left:330px;top:349px" width="12" height="12" viewBox="0 0 12 12" fill="none" stroke="#888" stroke-width="1"><rect x="3.5" y="0.5" width="8" height="8" rx="1"/><path d="M3.5 3.5h-2a1 1 0 0 0-1 1v6a1 1 0 0 0 1 1h6a1 1 0 0 0 1-1v-2"/></svg>
<div class="td" style="left:376px;top:345px">江苏省采</div>
<div class="td" style="left:496px;top:345px">文化用品/…</div>
<div class="td" style="left:616px;top:345px">无品牌</div>
<div class="td" style="left:736px;top:345px;width:8px;overflow:hidden">永</div><div class="a" style="left:743px;top:349px;width:65px;height:10px;filter:blur(0.7px)"><div class="a" style="left:0px;top:0px;width:14px;height:10px;background:#cdcdcd"></div><div class="a" style="left:14px;top:0px;width:14px;height:10px;background:#cdcdcd"></div><div class="a" style="left:28px;top:0px;width:14px;height:10px;background:#d6d6d6"></div><div class="a" style="left:42px;top:0px;width:14px;height:10px;background:#d6d6d6"></div><div class="a" style="left:56px;top:0px;width:9px;height:10px;background:#d9d9d9"></div></div><div class="a" style="left:743px;top:359px;width:81px;height:9px;filter:blur(0.7px)"><div class="a" style="left:0px;top:0px;width:14px;height:9px;background:#e1e1e1"></div><div class="a" style="left:14px;top:0px;width:14px;height:9px;background:#e6e6e6"></div><div class="a" style="left:28px;top:0px;width:14px;height:9px;background:#e6e6e6"></div><div class="a" style="left:42px;top:0px;width:14px;height:9px;background:#e9e9e9"></div><div class="a" style="left:56px;top:0px;width:14px;height:9px;background:#e1e1e1"></div><div class="a" style="left:70px;top:0px;width:11px;height:9px;background:#efefef"></div></div>
<div class="tag tb" style="left:856px;top:346px;width:52px">已审核</div>
<div class="tag tg" style="left:1091px;top:346px;width:40px">上架</div>
<div class="tag tg" style="left:1351px;top:346px;width:64px">本地上传</div>
<div class="td" style="left:1461px;top:345px">25-12-08 13:11:20</div>
<svg class="a" style="left:16px;top:412px" width="56" height="56" viewBox="0 0 56 56"><rect width="56" height="56" fill="#e7e7e7"/>
<rect x="4.8" y="6" width="45.2" height="38" rx="1" fill="#2b2b2b"/>
<rect x="8.6" y="11.6" width="37" height="5.8" rx="1" fill="#0f0f0f"/>
<rect x="18" y="19" width="18" height="1" fill="#555"/>
<rect x="8" y="21.7" width="6" height="5.9" fill="#e6d22a"/><rect x="39.8" y="23.8" width="7.2" height="5.2" fill="#8fb2d4"/>
<circle cx="19" cy="26" r="4" fill="none" stroke="#c05070" stroke-width="1"/><rect x="24" y="24" width="15" height="4" fill="#6a3044"/>
<rect x="19" y="29.8" width="17" height="10" fill="#0a0a0a"/>
<circle cx="46" cy="34" r="1.5" fill="#b8a030"/>
<ellipse cx="27.3" cy="49" rx="25.5" ry="5.6" fill="#1c1c1c"/><ellipse cx="27.3" cy="45" rx="20" ry="1.8" fill="#777"/></svg>
<div class="a" style="left:79px;top:434px;width:99px;overflow:hidden;font-size:12px;line-height:18px;color:#3a92ee;-webkit-text-stroke:0.15px #3a92ee">彩色UV机 wl</div>
<div class="a" style="left:195px;top:431px;width:126px;height:18px;filter:blur(0.7px)"><div class="a" style="left:0px;top:0px;width:14px;height:9px;background:#f2f7fe"></div><div class="a" style="left:14px;top:0px;width:14px;height:9px;background:#eef5fe"></div><div class="a" style="left:28px;top:0px;width:14px;height:9px;background:#f2f7fe"></div><div class="a" style="left:42px;top:0px;width:14px;height:9px;background:#f6f9fe"></div><div class="a" style="left:56px;top:0px;width:14px;height:9px;background:#eef5fe"></div><div class="a" style="left:70px;top:0px;width:14px;height:9px;background:#eef5fe"></div><div class="a" style="left:84px;top:0px;width:14px;height:9px;background:#f2f7fe"></div><div class="a" style="left:98px;top:0px;width:14px;height:9px;background:#f2f7fe"></div><div class="a" style="left:112px;top:0px;width:14px;height:9px;background:#f2f7fe"></div><div class="a" style="left:0px;top:9px;width:14px;height:9px;background:#a6cbf7"></div><div class="a" style="left:14px;top:9px;width:14px;height:9px;background:#b8d7f9"></div><div class="a" style="left:28px;top:9px;width:14px;height:9px;background:#9fc7f6"></div><div class="a" style="left:42px;top:9px;width:14px;height:9px;background:#a9cef8"></div><div class="a" style="left:56px;top:9px;width:14px;height:9px;background:#a6cbf7"></div><div class="a" style="left:70px;top:9px;width:14px;height:9px;background:#b0d2f8"></div><div class="a" style="left:84px;top:9px;width:14px;height:9px;background:#9fc7f6"></div><div class="a" style="left:98px;top:9px;width:14px;height:9px;background:#9fc7f6"></div><div class="a" style="left:112px;top:9px;width:14px;height:9px;background:#a9cef8"></div></div><div class="a" style="left:321px;top:440px;width:9px;height:9px;background:#ececec;filter:blur(.6px)"></div><svg class="a" style="left:330px;top:437px" width="12" height="12" viewBox="0 0 12 12" fill="none" stroke="#888" stroke-width="1"><rect x="3.5" y="0.5" width="8" height="8" rx="1"/><path d="M3.5 3.5h-2a1 1 0 0 0-1 1v6a1 1 0 0 0 1 1h6a1 1 0 0 0 1-1v-2"/></svg>
<div class="td" style="left:376px;top:433px">江苏省采</div>
<div class="td" style="left:496px;top:433px">文化用品/…</div>
<div class="td" style="left:616px;top:433px">无品牌</div>
<div class="a" style="left:736px;top:431px;width:72px;height:10px;filter:blur(0.7px)"><div class="a" style="left:0px;top:0px;width:14px;height:10px;background:#efefef"></div><div class="a" style="left:14px;top:0px;width:14px;height:10px;background:#e9e9e9"></div><div class="a" style="left:28px;top:0px;width:14px;height:10px;background:#ececec"></div><div class="a" style="left:42px;top:0px;width:14px;height:10px;background:#ececec"></div><div class="a" style="left:56px;top:0px;width:14px;height:10px;background:#ececec"></div><div class="a" style="left:70px;top:0px;width:2px;height:10px;background:#ececec"></div></div><div class="a" style="left:736px;top:441px;width:72px;height:8px;filter:blur(0.7px)"><div class="a" style="left:0px;top:0px;width:14px;height:8px;background:#d3d3d3"></div><div class="a" style="left:14px;top:0px;width:14px;height:8px;background:#c8c8c8"></div><div class="a" style="left:28px;top:0px;width:14px;height:8px;background:#d6d6d6"></div><div class="a" style="left:42px;top:0px;width:14px;height:8px;background:#d6d6d6"></div><div class="a" style="left:56px;top:0px;width:14px;height:8px;background:#c8c8c8"></div><div class="a" style="left:70px;top:0px;width:2px;height:8px;background:#d9d9d9"></div></div><div class="a" style="left:808px;top:441px;width:16px;height:8px;filter:blur(0.7px)"><div class="a" style="left:0px;top:0px;width:8px;height:8px;background:#e9e9e9"></div><div class="a" style="left:8px;top:0px;width:8px;height:8px;background:#e1e1e1"></div></div>
<div class="tag tb" style="left:856px;top:434px;width:52px">已审核</div>
<div class="tag tg" style="left:1091px;top:434px;width:40px">上架</div>
<div class="tag tg" style="left:1351px;top:434px;width:64px">本地上传</div>
<div class="td" style="left:1461px;top:433px">25-12-08 13:11:20</div>
<svg class="a" style="left:16px;top:500px" width="56" height="56" viewBox="0 0 56 56"><rect width="56" height="56" fill="#fff"/>
<path d="M6 13 L12 9 L26 22 L23 28 Z" fill="#2c2c2c"/><circle cx="9.5" cy="12.5" r="4" fill="#1e1e1e"/>
<path d="M32 11 L36 10 L40 15 L37 17 Z" fill="#222"/><rect x="33" y="18" width="6" height="1" fill="#555"/>
<path d="M48 12 L54 18" stroke="#333" stroke-width="0.9"/><rect x="48" y="19" width="5" height="0.8" fill="#555"/>
<circle cx="16.5" cy="29" r="5.2" fill="none" stroke="#e0607a" stroke-width="0.9"/><rect x="25" y="25" width="19" height="3.5" fill="#ec93a8"/>
<rect x="32" y="24" width="5" height="6" fill="#333"/>
<circle cx="50" cy="27.5" r="3.2" fill="#262626"/>
<rect x="12" y="33" width="8" height="0.8" fill="#555"/><rect x="33" y="33" width="9" height="0.8" fill="#555"/><rect x="45" y="32" width="10" height="0.8" fill="#555"/>
<rect x="6.5" y="52" width="44.5" height="3" fill="#262626"/></svg>
<div class="a" style="left:79px;top:522px;width:99px;overflow:hidden;font-size:12px;line-height:18px;color:#3a92ee;-webkit-text-stroke:0.15px #3a92ee">云台相机 wl</div>
<div class="a" style="left:195px;top:521px;width:126px;height:18px;filter:blur(0.7px)"><div class="a" style="left:0px;top:0px;width:14px;height:9px;background:#dbeafc"></div><div class="a" style="left:14px;top:0px;width:14px;height:9px;background:#cfe3fb"></div><div class="a" style="left:28px;top:0px;width:14px;height:9px;background:#c9e0fb"></div><div class="a" style="left:42px;top:0px;width:14px;height:9px;background:#cfe3fb"></div><div class="a" style="left:56px;top:0px;width:14px;height:9px;background:#c9e0fb"></div><div class="a" style="left:70px;top:0px;width:14px;height:9px;background:#c9e0fb"></div><div class="a" style="left:84px;top:0px;width:14px;height:9px;background:#c9e0fb"></div><div class="a" style="left:98px;top:0px;width:14px;height:9px;background:#dbeafc"></div><div class="a" style="left:112px;top:0px;width:14px;height:9px;background:#d6e7fc"></div><div class="a" style="left:0px;top:9px;width:14px;height:9px;background:#b8d7f9"></div><div class="a" style="left:14px;top:9px;width:14px;height:9px;background:#b0d2f8"></div><div class="a" style="left:28px;top:9px;width:14px;height:9px;background:#c2dcfa"></div><div class="a" style="left:42px;top:9px;width:14px;height:9px;background:#a6cbf7"></div><div class="a" style="left:56px;top:9px;width:14px;height:9px;background:#b0d2f8"></div><div class="a" style="left:70px;top:9px;width:14px;height:9px;background:#a6cbf7"></div><div class="a" style="left:84px;top:9px;width:14px;height:9px;background:#a9cef8"></div><div class="a" style="left:98px;top:9px;width:14px;height:9px;background:#b8d7f9"></div><div class="a" style="left:112px;top:9px;width:14px;height:9px;background:#b0d2f8"></div></div><div class="a" style="left:321px;top:521px;width:10px;height:18px;background:#ececec;filter:blur(.6px)"></div><svg class="a" style="left:330px;top:525px" width="12" height="12" viewBox="0 0 12 12" fill="none" stroke="#888" stroke-width="1"><rect x="3.5" y="0.5" width="8" height="8" rx="1"/><path d="M3.5 3.5h-2a1 1 0 0 0-1 1v6a1 1 0 0 0 1 1h6a1 1 0 0 0 1-1v-2"/></svg>
<div class="td" style="left:376px;top:521px">江苏省采</div>
<div class="td" style="left:496px;top:521px">文化用品/…</div>
<div class="td" style="left:616px;top:521px">无品牌</div>
<div class="a" style="left:736px;top:521px;width:72px;height:18px;filter:blur(0.7px)"><div class="a" style="left:0px;top:0px;width:14px;height:9px;background:#d9d9d9"></div><div class="a" style="left:14px;top:0px;width:14px;height:9px;background:#d3d3d3"></div><div class="a" style="left:28px;top:0px;width:14px;height:9px;background:#c8c8c8"></div><div class="a" style="left:42px;top:0px;width:14px;height:9px;background:#d6d6d6"></div><div class="a" style="left:56px;top:0px;width:14px;height:9px;background:#d3d3d3"></div><div class="a" style="left:70px;top:0px;width:2px;height:9px;background:#d9d9d9"></div><div class="a" style="left:0px;top:9px;width:14px;height:9px;background:#d9d9d9"></div><div class="a" style="left:14px;top:9px;width:14px;height:9px;background:#d3d3d3"></div><div class="a" style="left:28px;top:9px;width:14px;height:9px;background:#d3d3d3"></div><div class="a" style="left:42px;top:9px;width:14px;height:9px;background:#d6d6d6"></div><div class="a" style="left:56px;top:9px;width:14px;height:9px;background:#d9d9d9"></div><div class="a" style="left:70px;top:9px;width:2px;height:9px;background:#d6d6d6"></div></div><div class="a" style="left:808px;top:530px;width:16px;height:8px;filter:blur(0.7px)"><div class="a" style="left:0px;top:0px;width:8px;height:8px;background:#e9e9e9"></div><div class="a" style="left:8px;top:0px;width:8px;height:8px;background:#e1e1e1"></div></div>
<div class="tag tb" style="left:856px;top:522px;width:52px">已审核</div>
<div class="tag tg" style="left:1091px;top:522px;width:40px">上架</div>
<div class="tag tg" style="left:1351px;top:522px;width:64px">本地上传</div>
<div class="td" style="left:1461px;top:521px">25-12-08 13:11:20</div>
<div class="a" style="left:1528px;top:0;width:100px;height:565px;background:#fff;box-shadow:-3px 0 8px rgba(0,0,0,.08)">
<div class="hl" style="left:0;top:0;width:100px"></div>
<div class="a" style="left:0;top:136px;width:100px;height:87px;background:#fafafa"></div>
<div class="a" style="left:0;top:312px;width:100px;height:87px;background:#fafafa"></div>
<div class="a" style="left:0;top:488px;width:100px;height:87px;background:#fafafa"></div>
<div class="hl" style="left:0;top:47px;width:100px"></div>
<div class="hl" style="left:0;top:135px;width:100px"></div>
<div class="hl" style="left:0;top:223px;width:100px"></div>
<div class="hl" style="left:0;top:311px;width:100px"></div>
<div class="hl" style="left:0;top:399px;width:100px"></div>
<div class="hl" style="left:0;top:487px;width:100px"></div>
<div class="hl" style="left:0;top:575px;width:100px"></div>
<div class="hl" style="left:0;top:564px;width:100px"></div>
<div class="vl" style="left:99px;top:0;height:565px"></div>
<div class="th" style="left:16px;top:14px">操作</div>
<div class="a" style="left:16px;top:82px;font-size:12px;line-height:18px;color:#409eff">操作</div>
<svg class="a" style="left:47px;top:88px" width="10" height="6" viewBox="0 0 10 6" fill="none" stroke="#409eff" stroke-width="1"><path d="M1 1l4 4 4-4"/></svg>
<div class="a" style="left:16px;top:170px;font-size:12px;line-height:18px;color:#409eff">操作</div>
<svg class="a" style="left:47px;top:176px" width="10" height="6" viewBox="0 0 10 6" fill="none" stroke="#409eff" stroke-width="1"><path d="M1 1l4 4 4-4"/></svg>
<div class="a" style="left:16px;top:258px;font-size:12px;line-height:18px;color:#409eff">操作</div>
<svg class="a" style="left:47px;top:264px" width="10" height="6" viewBox="0 0 10 6" fill="none" stroke="#409eff" stroke-width="1"><path d="M1 1l4 4 4-4"/></svg>
<div class="a" style="left:16px;top:346px;font-size:12px;line-height:18px;color:#409eff">操作</div>
<svg class="a" style="left:47px;top:352px" width="10" height="6" viewBox="0 0 10 6" fill="none" stroke="#409eff" stroke-width="1"><path d="M1 1l4 4 4-4"/></svg>
<div class="a" style="left:16px;top:434px;font-size:12px;line-height:18px;color:#409eff">操作</div>
<svg class="a" style="left:47px;top:440px" width="10" height="6" viewBox="0 0 10 6" fill="none" stroke="#409eff" stroke-width="1"><path d="M1 1l4 4 4-4"/></svg>
<div class="a" style="left:16px;top:522px;font-size:12px;line-height:18px;color:#409eff">操作</div>
<svg class="a" style="left:47px;top:528px" width="10" height="6" viewBox="0 0 10 6" fill="none" stroke="#409eff" stroke-width="1"><path d="M1 1l4 4 4-4"/></svg>
</div>
</div>
<div class="a" style="left:254px;top:807px;line-height:20px;font-size:14px;color:#606266">共 345184 条</div>
<div class="inp" style="left:353px;top:797px;width:128px;height:40px;line-height:38px;padding-left:14px;color:#606266">20条/页</div>
<svg class="a" style="left:453px;top:814px" width="11" height="7" viewBox="0 0 11 7" fill="none" stroke="#c0c4cc" stroke-width="1"><path d="M1 1l4.5 4.5L10 1"/></svg>
<div class="pg" style="left:497px"></div>
<svg class="a" style="left:513px;top:812px" width="7" height="11" viewBox="0 0 7 11" fill="none" stroke="#c0c4cc" stroke-width="1.2"><path d="M5.5 1L1.5 5.5 5.5 10"/></svg>
<div class="pg" style="left:545px;width:40px;background:#409eff;color:#fff;font-weight:bold">1</div>
<div class="pg" style="left:593px;width:40px">2</div>
<div class="pg" style="left:641px;width:40px">3</div>
<div class="pg" style="left:689px;width:40px">4</div>
<div class="pg" style="left:737px;width:40px">5</div>
<div class="pg" style="left:785px;width:40px">6</div>
<div class="pg" style="left:833px;width:40px"></div>
<svg class="a" style="left:847px;top:815px" width="12" height="4" viewBox="0 0 12 4" fill="#303133"><circle cx="2" cy="2" r="1.5"/><circle cx="6" cy="2" r="1.5"/><circle cx="10" cy="2" r="1.5"/></svg>
<div class="pg" style="left:881px;width:46px">17260</div>
<div class="pg" style="left:935px"></div>
<svg class="a" style="left:952px;top:812px" width="7" height="11" viewBox="0 0 7 11" fill="none" stroke="#303133" stroke-width="1.2"><path d="M1.5 1l4 4.5-4 4.5"/></svg>
<div class="a" style="left:996px;top:807px;line-height:20px;font-size:14px;color:#606266">前往</div>
<div class="inp" style="left:1031px;top:797px;width:56px;height:40px;line-height:38px;padding:0;text-align:center;color:#606266">1</div>
<div class="a" style="left:1104px;top:807px;line-height:20px;font-size:14px;color:#606266">页</div>
<div class="btn" style="left:1775px;top:801px;width:107px;background:#409eff;border:1px solid #409eff;color:#fff;font-weight:bold;padding-left:16px">表格设置</div>
<svg class="a" style="left:1792px;top:811px" width="12" height="12" viewBox="0 0 12 12" fill="none" stroke="#fff" stroke-width="1"><circle cx="6" cy="6" r="4.8"/><circle cx="6" cy="6" r="2"/></svg>
<div class="a" style="left:804px;top:873px;line-height:20px;font-size:14px;color:#222">技术支持:<span style="margin-left:2px"></span><span style="color:#b9692e">江苏新开软件有限公司</span> <span style="color:#3a6fd8;letter-spacing:0.25px">&nbsp;https://xinkaisoft.com</span> 联系人:<span style="color:#3a6fd8">吴先生,<span style="letter-spacing:-0.15px">18862757669</span></span></div>
</body></html>
